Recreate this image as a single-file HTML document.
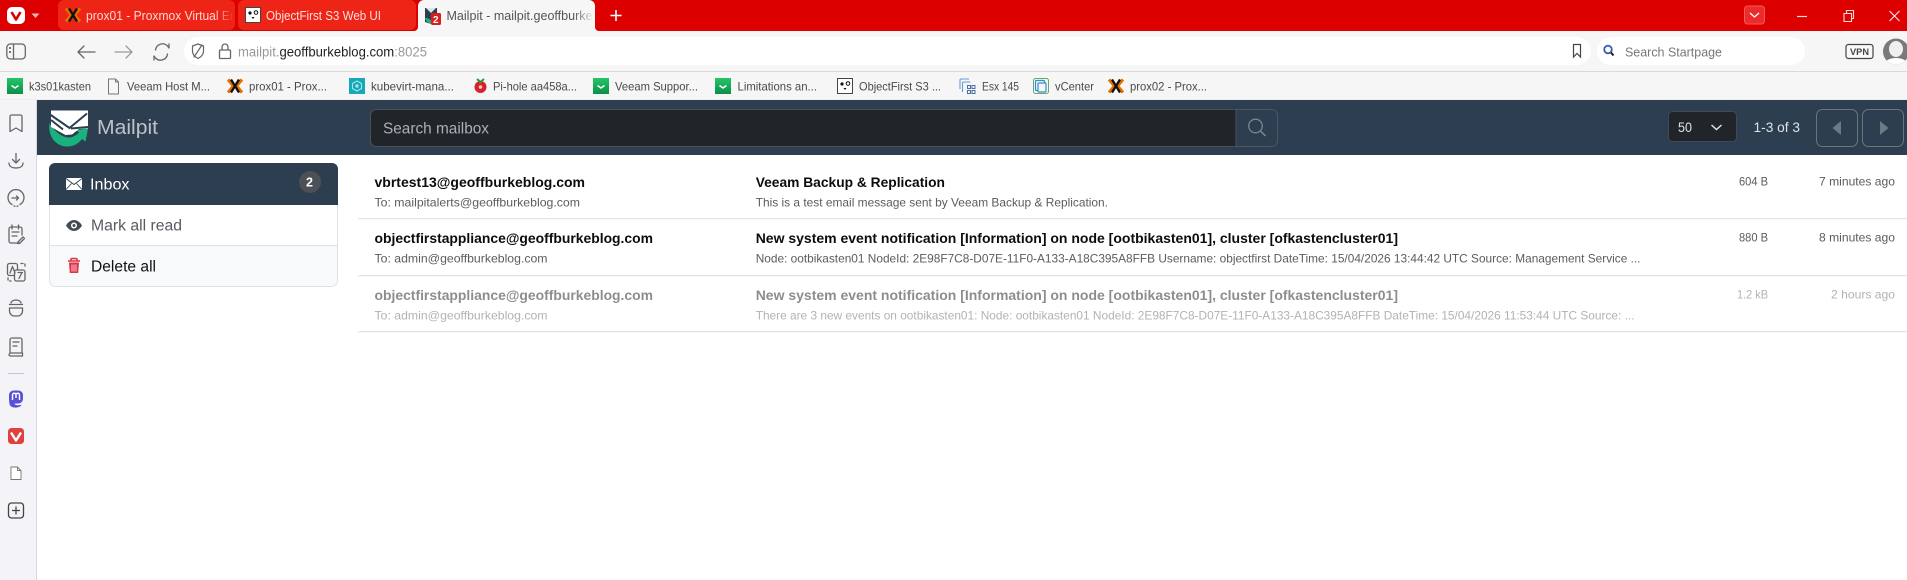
<!DOCTYPE html>
<html lang="en"><head><meta charset="utf-8"><title>Mailpit - mailpit.geoffburkeblog.com</title>
<style>
html,body{margin:0;padding:0;width:1907px;height:580px;overflow:hidden;background:#fff}
svg{display:block}
text{font-family:"Liberation Sans",sans-serif;white-space:pre}
.tab{font-size:12.5px}.bm{font-size:12px;fill:#4a4a4a}
.b{font-weight:bold;font-size:14px;fill:#0c0c0c}
.s{font-size:12px;fill:#5c5c5c}
.r{font-size:12px;fill:#5c5c5c}
.side{font-size:15.5px}
.ic{fill:none;stroke:#666;stroke-width:1.3;stroke-linecap:round;stroke-linejoin:round}
.tb{fill:none;stroke:#666;stroke-width:1.3;stroke-linecap:round;stroke-linejoin:round}
.bmi{fill:none;stroke:#555;stroke-width:1.2;stroke-linejoin:round}
</style></head><body>
<svg xmlns="http://www.w3.org/2000/svg" width="1907" height="580" viewBox="0 0 1907 580">
<defs>
<linearGradient id="f1" x1="0" x2="1"><stop offset="0" stop-color="#ee2416" stop-opacity="0"/><stop offset="1" stop-color="#ee2416"/></linearGradient>
<linearGradient id="f3" x1="0" x2="1"><stop offset="0" stop-color="#f6f6f6" stop-opacity="0"/><stop offset="1" stop-color="#f6f6f6"/></linearGradient>
<linearGradient id="vg" x1="0" x2="0" y1="0" y2="1"><stop offset="0" stop-color="#25c569"/><stop offset="1" stop-color="#0a8f48"/></linearGradient>
<symbol id="prox" viewBox="0 0 16 16"><path d="M1 1.500L6.500 8 1 14.500M15 1.500L9.500 8 15 14.500" fill="none" stroke="#e57000" stroke-width="3.200"/><path d="M4 1.500L12 14.500M12 1.500L4 14.500" fill="none" stroke="#111" stroke-width="2.300"/></symbol>
<symbol id="veeam" viewBox="0 0 16 16"><rect width="16" height="16" fill="url(#vg)"/><path d="M4.500 7.500L8 10 11.500 7.500" fill="none" stroke="#fff" stroke-width="1.500"/></symbol>
<symbol id="of" viewBox="0 0 16 16"><rect x=".5" y=".5" width="15" height="15" fill="#fff" stroke="#444"/><circle cx="5" cy="6" r="1.600" fill="#111"/><circle cx="11" cy="5.500" r="1.800" fill="#fff" stroke="#111"/><path d="M6.500 10h3L8 12z" fill="#111"/></symbol>
</defs>

<!-- tab bar -->
<rect x="0" y="0" width="1907" height="31" fill="#dc0000"/>
<rect x="7" y="7" width="18" height="17" rx="5" fill="#fff"/>
<path d="M11.500 12l4.500 7.500 4.500-7.500" fill="none" stroke="#dc0000" stroke-width="2.600" stroke-linejoin="round"/>
<path d="M31.500 13.500h8l-4 4.500z" fill="#f3b5b5"/>

<path d="M58 6a6 6 0 0 1 6-6h165a6 6 0 0 1 6 6v18a6 6 0 0 1-6 6H64a6 6 0 0 1-6-6z" fill="#ee2416"/>
<use href="#prox" x="65" y="7" width="16" height="16"/>
<text class="tab" x="86" y="20" fill="#ffd9d5" textLength="148" lengthAdjust="spacingAndGlyphs">prox01 - Proxmox Virtual Er</text>
<rect x="214" y="2" width="20" height="26" fill="url(#f1)"/>

<path d="M238 6a6 6 0 0 1 6-6h166a6 6 0 0 1 6 6v18a6 6 0 0 1-6 6H244a6 6 0 0 1-6-6z" fill="#ee2416"/>
<use href="#of" x="245" y="7" width="16" height="16"/>
<text class="tab" x="266" y="20" fill="#ffe0dd" textLength="115" lengthAdjust="spacingAndGlyphs">ObjectFirst S3 Web UI</text>

<path d="M414 31a4 4 0 0 0 4-4V6a6 6 0 0 1 6-6h165a6 6 0 0 1 6 6v21a4 4 0 0 0 4 4z" fill="#f6f6f6"/>
<path d="M425 8h12v8l-2 6 -4 2-6-2z" fill="#2c3e50"/><path d="M425 18c1 4 4 6 8 6l2-2-8-4z" fill="#20b07a"/><path d="M426 8l5 5 5-5z" fill="#dfe3e6"/>
<rect x="431" y="13" width="10" height="12" rx="1.500" fill="#d81e1e"/><text x="433" y="23" font-size="10" font-weight="bold" fill="#fff">2</text>
<text class="tab" x="446.500" y="20" fill="#555" textLength="146" lengthAdjust="spacingAndGlyphs">Mailpit - mailpit.geoffburke</text>
<rect x="574" y="2" width="20" height="27" fill="url(#f3)"/>
<path d="M616 10v11M610.500 15.500h11" stroke="#fff" stroke-width="1.600"/>

<rect x="1744.500" y="6" width="20" height="18" rx="3" fill="#ee2a2a" stroke="#f45a5a"/>
<path d="M1750 13l4.500 4 4.500-4" fill="none" stroke="#fff" stroke-width="1.400"/>
<path d="M1797 16.500h10" stroke="#ffd8d8" stroke-width="1.200"/>
<path d="M1844 13.500h7.500v8h-7.500zM1846.500 13v-2.500h7v8h-2" fill="none" stroke="#ffd8d8" stroke-width="1.100"/>
<path d="M1889.500 11l10 10M1899.500 11l-10 10" stroke="#ffe0e0" stroke-width="1.200"/>

<!-- toolbar -->
<rect x="0" y="31" width="1907" height="40" fill="#f6f6f6"/>
<rect x="0" y="71" width="1907" height="1" fill="#d9d9d9"/>
<rect x="184" y="37" width="1407" height="28" rx="14" fill="#fff"/>
<rect x="1597" y="37" width="208" height="28" rx="14" fill="#fff"/>
<rect x="6.800" y="44" width="18.500" height="15" rx="3.500" class="tb"/><path d="M13.500 44v15" class="tb"/><rect x="9" y="47" width="2" height="2" fill="#777"/><rect x="9" y="51" width="2" height="2" fill="#777"/>
<path d="M78 52h17M84 46l-6 6 6 6" class="tb"/>
<path d="M115 52h17M126 46l6 6-6 6" class="tb" style="stroke:#999"/>
<path d="M155.500 50a7 7 0 0 1 12-4l1.500 2v-4M167.500 54a7 7 0 0 1-12 4l-1.500-2v4" class="tb"/>
<path d="M192.500 46l5.500-2 5.500 2v5c0 3.500-2.500 6-5.500 7.500-3-1.500-5.500-4-5.500-7.500zM194 57l8-12" class="tb" style="stroke-width:1.200"/>
<rect x="219.500" y="50" width="11" height="8.500" rx="1" class="tb"/><path d="M222 50v-3a3 3 0 0 1 6 0v3" class="tb"/>
<text x="238" y="56.500" font-size="13.500" textLength="189" lengthAdjust="spacingAndGlyphs" fill="#999"><tspan fill="#999">mailpit.</tspan><tspan fill="#222">geoffburkeblog.com</tspan><tspan fill="#999">:8025</tspan></text>
<path d="M1573.500 44.500h7v12.500l-3.500-3.500-3.500 3.500z" fill="none" stroke="#444" stroke-width="1.200"/>
<circle cx="1608" cy="49.500" r="3.800" fill="none" stroke="#3763b0" stroke-width="1.800"/><path d="M1611 52.500l2.500 3" stroke="#222" stroke-width="2"/>
<text x="1625" y="56.500" font-size="13" fill="#777" textLength="97" lengthAdjust="spacingAndGlyphs">Search Startpage</text>
<rect x="1846" y="44.500" width="27" height="14" rx="2.500" fill="#fafafa" stroke="#444" stroke-width="1.200"/>
<text x="1850" y="55" font-size="9.500" font-weight="bold" fill="#444" textLength="19" lengthAdjust="spacingAndGlyphs">VPN</text>
<clipPath id="av"><circle cx="1896" cy="51.500" r="13"/></clipPath>
<g clip-path="url(#av)"><rect x="1880" y="38" width="30" height="30" fill="#7a7a7a"/><ellipse cx="1896" cy="49" rx="7" ry="8" fill="#f0f0f0"/><ellipse cx="1896" cy="66" rx="13" ry="8" fill="#fff"/></g>

<!-- bookmarks -->
<rect x="0" y="72" width="1907" height="28" fill="#f6f6f6"/>
<rect x="0" y="99.500" width="1907" height="1" fill="#e0e4e8"/>
<use href="#veeam" x="7" y="78" width="16" height="16"/>
<text class="bm" x="29" y="90.500" textLength="62" lengthAdjust="spacingAndGlyphs">k3s01kasten</text>
<path d="M108.500 79h7l3 3v12h-10zM115.500 79v3h3" class="bmi" style="stroke:#777;stroke-width:1"/>
<text class="bm" x="127" y="90.500" textLength="83" lengthAdjust="spacingAndGlyphs">Veeam Host M...</text>
<use href="#prox" x="227" y="78" width="16" height="16"/>
<text class="bm" x="249" y="90.500" textLength="78" lengthAdjust="spacingAndGlyphs">prox01 - Prox...</text>
<rect x="349" y="78" width="16" height="16" fill="#14a8b8"/><path d="M357 81l4.500 2.500v5L357 91l-4.500-2.500v-5z" fill="none" stroke="#a8e5ea" stroke-width="1.100"/><circle cx="357" cy="86" r="1.700" fill="#a8e5ea"/>
<circle cx="480.500" cy="87" r="6" fill="#d4232c"/><path d="M477 79l3.500 3 3.500-3" fill="none" stroke="#2d9a3a" stroke-width="2"/><circle cx="480.500" cy="87" r="1.800" fill="#f9c5c5"/>
<text class="bm" x="493" y="90.500" textLength="84" lengthAdjust="spacingAndGlyphs">Pi-hole aa458a...</text>
<text class="bm" x="371" y="90.500" textLength="83" lengthAdjust="spacingAndGlyphs">kubevirt-mana...</text>
<use href="#veeam" x="593" y="78" width="16" height="16"/>
<text class="bm" x="615" y="90.500" textLength="83" lengthAdjust="spacingAndGlyphs">Veeam Suppor...</text>
<use href="#veeam" x="715" y="78" width="16" height="16"/>
<text class="bm" x="737.500" y="90.500" textLength="79.500" lengthAdjust="spacingAndGlyphs">Limitations an...</text>
<use href="#of" x="837" y="78" width="16" height="16"/>
<text class="bm" x="859" y="90.500" textLength="82" lengthAdjust="spacingAndGlyphs">ObjectFirst S3 ...</text>
<path d="M960 89v-9a1 1 0 0 1 1-1h8" fill="none" stroke="#6a9bd8" stroke-width="1.100"/><path d="M962.500 92v-9a1 1 0 0 1 1-1h7" fill="none" stroke="#6a9bd8" stroke-width="1.100"/>
<g fill="none" stroke="#4a6ea8"><rect x="967.500" y="85.500" width="3" height="3"/><rect x="972" y="85.500" width="3" height="3"/><rect x="967.500" y="90.500" width="3" height="3"/><rect x="972" y="90.500" width="3" height="3"/></g>
<text class="bm" x="982" y="90.500" textLength="37" lengthAdjust="spacingAndGlyphs">Esx 145</text>
<rect x="1033.500" y="78.500" width="15" height="15" rx="2" fill="none" stroke="#6aa86a" stroke-width="1"/><rect x="1035.500" y="80.500" width="9" height="10" rx="1" fill="none" stroke="#2f8fc8" stroke-width="1.200"/><rect x="1038" y="83" width="8" height="9" rx="1" fill="#f6f6f6" stroke="#2f8fc8" stroke-width="1.200"/>
<text class="bm" x="1055" y="90.500" textLength="39" lengthAdjust="spacingAndGlyphs">vCenter</text>
<use href="#prox" x="1108" y="78" width="16" height="16"/>
<text class="bm" x="1130" y="90.500" textLength="77" lengthAdjust="spacingAndGlyphs">prox02 - Prox...</text>

<!-- left panel -->
<rect x="0" y="100" width="36" height="480" fill="#f3f3f8"/>
<rect x="36" y="100" width="1" height="480" fill="#d8d8de"/>
<g class="ic">
<path d="M10 116.500a1.500 1.500 0 0 1 1.500-1.500h9a1.500 1.500 0 0 1 1.500 1.500v15l-6-3.500-6 3.500z"/>
<path d="M16 153.500v9M12.500 159.500l3.500 3.500 3.500-3.500M9 163c0 3 2.500 5 7 5s7-2 7-5"/>
<path d="M12 204.500a8 8 0 1 1 8 0M14 206l1 .2M17 206.200l1-.2"/><path d="M12 198h6.500M16.500 196l2 2-2 2"/>
<path d="M19 243h-8a2 2 0 0 1-2-2v-12a2 2 0 0 1 2-2h9a2 2 0 0 1 2 2v6M12 225v4M18.500 225v4M12 232h7M12 236h5M18 242l5-5 1.500 1.500-5 5h-2z"/>
<rect x="7.500" y="263.500" width="10" height="12" rx="2"/><rect x="14.500" y="270" width="10.500" height="11" rx="2" fill="#f3f3f8"/><path d="M10 273l2.500-6.500 2.500 6.500M18 272.500h4.500M22 272.500l-3 6"/><path d="M8 278v2a1 1 0 0 0 1 1h2M21 263.500h3a1 1 0 0 1 1 1v3" stroke-dasharray="2 2"/>
<path d="M11 303a5 3 0 0 1 10 0M9.500 304.500h13M9.500 308h13v3a5 5 0 0 1-5 5h-3a5 5 0 0 1-5-5z"/>
<path d="M10 353v-13a2 2 0 0 1 2-2h8a2 2 0 0 1 2 2v13M9 355a2 2 0 0 1 2-2h11.500v3H11a2 2 0 0 1-2-1zM13 342h6M13 346h4"/>
</g>
<rect x="8" y="373" width="16" height="1" fill="#c6c6cc"/>
<path d="M9 395a4.500 4.500 0 0 1 4.500-4.500h5a4.500 4.500 0 0 1 4.500 4.500v4a4.500 4.500 0 0 1-4.500 4.500h-4c.5 2 3 2 7 1.200-1 3-8 4-11 1.300C9 404.500 9 400 9 395z" fill="#5b50d6"/>
<path d="M12.500 400v-5a1.700 1.700 0 0 1 3.500 0v3m0-3a1.700 1.700 0 0 1 3.500 0v5" fill="none" stroke="#fff" stroke-width="1.400"/>
<rect x="8" y="428" width="16" height="16" rx="3.500" fill="#e04040"/>
<path d="M11 432.500l5 8 5-8" fill="none" stroke="#fff" stroke-width="2.400" stroke-linejoin="round"/>
<path d="M11 467h6.500l3.500 3.500V479.500H11zM17.500 467v3.500H21" fill="#fff" stroke="#777" stroke-width=".9"/>
<rect x="8.500" y="503" width="15" height="15" rx="3" fill="none" stroke="#444" stroke-width="1.300"/><path d="M16 506.500v8M12 510.500h8" stroke="#444" stroke-width="1.300"/>

<!-- mailpit header -->
<rect x="37" y="100" width="1870" height="55" fill="#2c3e50"/>
<!-- logo -->
<path d="M49.500 123c-2 13 6 23 17 23.500 7 .3 12-3 15.500-7.500l3.500 2.500 2.500-13-12 1.500 3 2.500c-3 3-7 5.500-11 5-7-.5-14-7-19-14.500z" fill="#19b27e"/>
<path d="M51 110.500h37v18l-9 .5-7 5.500-6.500 .5-14.500-8z" fill="#fff"/>
<path d="M50 114.500L69.500 128 87 113.500M51 120l12 9.500M71 128.500l17-1.500" fill="none" stroke="#2c3e50" stroke-width="2"/>
<text x="97" y="134" font-size="20" fill="#bcc2c8" textLength="61" lengthAdjust="spacingAndGlyphs">Mailpit</text>
<rect x="370.500" y="109.500" width="907" height="37" rx="6" fill="#2c3e50" stroke="#495767"/>
<path d="M1236 109.500H376.500a6 6 0 0 0-6 6v25a6 6 0 0 0 6 6H1236z" fill="#212529" stroke="#495057"/>
<text x="383" y="133.500" font-size="16" fill="#aab0b6" textLength="106" lengthAdjust="spacingAndGlyphs">Search mailbox</text>
<circle cx="1255.500" cy="126" r="6.800" fill="none" stroke="#7d8791" stroke-width="1.300"/><path d="M1260.500 131l5 5" stroke="#7d8791" stroke-width="1.500"/>
<rect x="1668.500" y="111.500" width="68" height="30" rx="4" fill="#212529" stroke="#3d4a57"/>
<text x="1678" y="132" font-size="14" fill="#dee2e6" textLength="14" lengthAdjust="spacingAndGlyphs">50</text>
<path d="M1711.500 125l5 4.500 5-4.500" fill="none" stroke="#dee2e6" stroke-width="1.500"/>
<text x="1753.500" y="132" font-size="14" fill="#dee2e6" textLength="46.500" lengthAdjust="spacingAndGlyphs">1-3 of 3</text>
<rect x="1816.500" y="109.500" width="41" height="37" rx="6" fill="none" stroke="#6c757d"/>
<rect x="1862.500" y="109.500" width="41" height="37" rx="6" fill="none" stroke="#6c757d"/>
<path d="M1841 121v14l-8.500-7z" fill="#6f7983"/>
<path d="M1880 121v14l8.500-7z" fill="#6f7983"/>

<!-- sidebar -->
<rect x="49.500" y="163.500" width="288" height="123" rx="6" fill="#fff" stroke="#dee2e6"/>
<path d="M50 246h287v34a6 6 0 0 1-6 6H56a6 6 0 0 1-6-6z" fill="#f8f9fa"/>
<path d="M49.500 245.500h288" stroke="#dee2e6"/>
<path d="M49 205v-36a6 6 0 0 1 6-6h277a6 6 0 0 1 6 6v36z" fill="#2c3e50"/>
<rect x="66" y="178" width="16" height="12" fill="#fff"/><path d="M66 178.500l8 6 8-6M66 189.500l5.500-6M82 189.500l-5.500-6" fill="none" stroke="#2c3e50" stroke-width=".9"/>
<text class="side" x="90" y="189.500" fill="#fff" textLength="39.500" lengthAdjust="spacingAndGlyphs">Inbox</text>
<circle cx="310" cy="182" r="11" fill="#4c5156"/>
<text x="306" y="186.500" font-size="12.500" font-weight="bold" fill="#fff">2</text>
<path d="M66 225.500c2-3.500 5-5.500 8-5.500s6 2 8 5.500c-2 3.500-5 5.500-8 5.500s-6-2-8-5.500z" fill="#444b52"/><circle cx="74" cy="225.500" r="3" fill="#fff"/><circle cx="74" cy="225.500" r="1.500" fill="#444b52"/>
<text class="side" x="91" y="230.500" fill="#565c62" textLength="91" lengthAdjust="spacingAndGlyphs">Mark all read</text>
<path d="M68 261h12M71 261v-1.500a1 1 0 0 1 1-1h4a1 1 0 0 1 1 1v1.500" fill="none" stroke="#dc3545" stroke-width="1.600"/><path d="M69 262.500h10l-.8 10.500H69.800z" fill="#dc3545"/><path d="M72 264.500v7M74 264.500v7M76 264.500v7" stroke="#fbd7da" stroke-width=".9"/>
<text class="side" x="91" y="271.500" fill="#111" textLength="65" lengthAdjust="spacingAndGlyphs">Delete all</text>

<!-- messages -->
<g fill="#e2e4e6">
<rect x="358" y="218" width="1549" height="1.300"/>
<rect x="358" y="275" width="1549" height="1.300"/>
<rect x="358" y="331" width="1549" height="1.300"/>
</g>
<text class="b" x="374.500" y="187" textLength="210.500" lengthAdjust="spacingAndGlyphs">vbrtest13@geoffburkeblog.com</text>
<text class="s" x="374.500" y="206.500" textLength="205.500" lengthAdjust="spacingAndGlyphs">To: mailpitalerts@geoffburkeblog.com</text>
<text class="b" x="755.700" y="187" textLength="189.300" lengthAdjust="spacingAndGlyphs">Veeam Backup &amp; Replication</text>
<text class="s" x="755.700" y="206.500" textLength="352.300" lengthAdjust="spacingAndGlyphs">This is a test email message sent by Veeam Backup &amp; Replication.</text>
<text class="r" x="1739" y="185.500" textLength="29" lengthAdjust="spacingAndGlyphs">604 B</text>
<text class="r" x="1819" y="185.500" textLength="76" lengthAdjust="spacingAndGlyphs">7 minutes ago</text>

<text class="b" x="374.500" y="243" textLength="278.500" lengthAdjust="spacingAndGlyphs">objectfirstappliance@geoffburkeblog.com</text>
<text class="s" x="374.500" y="262.500" textLength="173" lengthAdjust="spacingAndGlyphs">To: admin@geoffburkeblog.com</text>
<text class="b" x="755.700" y="243" textLength="642.300" lengthAdjust="spacingAndGlyphs">New system event notification [Information] on node [ootbikasten01], cluster [ofkastencluster01]</text>
<text class="s" x="755.700" y="262.500" textLength="884.800" lengthAdjust="spacingAndGlyphs">Node: ootbikasten01 NodeId: 2E98F7C8-D07E-11F0-A133-A18C395A8FFB Username: objectfirst DateTime: 15/04/2026 13:44:42 UTC Source: Management Service ...</text>
<text class="r" x="1739" y="241.500" textLength="29" lengthAdjust="spacingAndGlyphs">880 B</text>
<text class="r" x="1819" y="241.500" textLength="76" lengthAdjust="spacingAndGlyphs">8 minutes ago</text>

<g opacity=".47">
<text class="b" x="374.500" y="300" textLength="278.500" lengthAdjust="spacingAndGlyphs">objectfirstappliance@geoffburkeblog.com</text>
<text class="s" x="374.500" y="319.500" textLength="173" lengthAdjust="spacingAndGlyphs">To: admin@geoffburkeblog.com</text>
<text class="b" x="755.700" y="300" textLength="642.300" lengthAdjust="spacingAndGlyphs">New system event notification [Information] on node [ootbikasten01], cluster [ofkastencluster01]</text>
<text class="s" x="755.700" y="319.500" textLength="878.800" lengthAdjust="spacingAndGlyphs">There are 3 new events on ootbikasten01: Node: ootbikasten01 NodeId: 2E98F7C8-D07E-11F0-A133-A18C395A8FFB DateTime: 15/04/2026 11:53:44 UTC Source: ...</text>
<text class="r" x="1737" y="298.500" textLength="31" lengthAdjust="spacingAndGlyphs">1.2 kB</text>
<text class="r" x="1831" y="298.500" textLength="64" lengthAdjust="spacingAndGlyphs">2 hours ago</text>
</g>
</svg>
</body></html>
